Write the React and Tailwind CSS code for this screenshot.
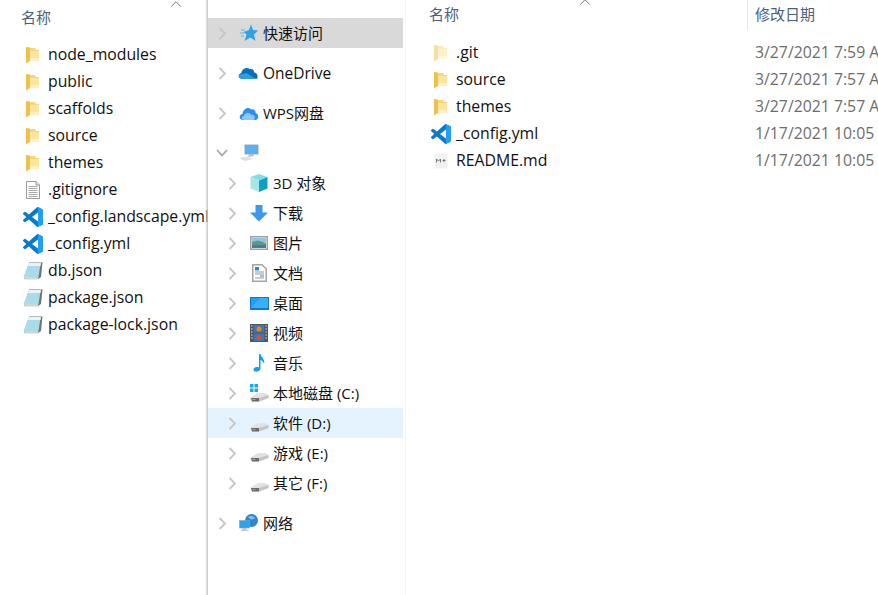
import { ChevronUp } from "lucide-react";

const font = "font-['Open_Sans','Noto_Sans_CJK_SC',sans-serif]";

const Folder = ({ faded }) => (
  <svg width="13" height="18" viewBox="0 0 13 18" className={`-ml-px ${faded ? "opacity-50" : ""}`}>
    <path d="M0 2 H9 L10 4 H13 V15 H0 Z" fill="#f7d675" />
    <path d="M4 5 H13 V15 H4 Z" fill="#fde59c" />
    <path d="M0 1 L4 1.5 V15 L0 17.5 Z" fill="#eec04e" />
    <path d="M4 12 H13 V15 H4 Z" fill="#fff0c2" />
  </svg>
);

const TextFile = () => (
  <svg width="16" height="18" viewBox="0 0 16 18">
    <path d="M1.5 .5 H11 L14.5 4 V17.5 H1.5 Z" fill="#fff" stroke="#9a9a9a" />
    <path d="M11 .5 V4 H14.5" fill="#ddd" stroke="#9a9a9a" />
    <path d="M3.5 5.5 H12.5 M3.5 7.5 H12.5 M3.5 9.5 H12.5 M3.5 11.5 H12.5 M3.5 13.5 H12.5 M3.5 15.5 H12.5" stroke="#a8a8a8" />
  </svg>
);

const VSCode = () => (
  <svg width="20" height="20" viewBox="0 0 24 24">
    <path
      d="M23.15 2.587L18.21.21a1.494 1.494 0 0 0-1.705.29l-9.46 8.63-4.12-3.128a.999.999 0 0 0-1.276.057L.327 7.261A1 1 0 0 0 .326 8.74L3.899 12 .326 15.26a1 1 0 0 0 .001 1.479L1.65 17.94a.999.999 0 0 0 1.276.057l4.12-3.128 9.46 8.63a1.492 1.492 0 0 0 1.704.29l4.942-2.377A1.5 1.5 0 0 0 24 20.06V3.939a1.5 1.5 0 0 0-.85-1.352zm-5.146 14.861L10.826 12l7.178-5.448v10.896z"
      fill="#0b7bc9"
    />
    <path d="M18 0 L23.2 2.6 Q24 3.1 24 4 V20 Q24 21 23.2 21.4 L18 24 Z" fill="#1fa0f4" />
  </svg>
);

const Notepad = () => (
  <svg width="20" height="18" viewBox="0 0 20 18">
    <path d="M6 0.5 H19.5 L18 15 L15 17 L1 17 Z" fill="#69777a" />
    <path d="M5.5 2 H17.5 L15.5 15 H0.5 Z" fill="#a8dce8" />
    <path d="M5.5 1 H18 L17.5 4 H5 Z" fill="#eef2f2" />
    <path d="M0.5 15 H15.5 L14.5 17.5 H2 Z" fill="#cfd6d6" />
  </svg>
);

const Markdown = () => (
  <svg width="14" height="16" viewBox="0 0 14 16">
    <rect x="0.5" y="0.5" width="13" height="15" fill="#f1f1f1" />
    <path d="M2.5 9.5 V6 L4.5 8 L6.5 6 V9.5" fill="none" stroke="#777" strokeWidth="1" />
    <path d="M8.5 7.5 H11.5 M10 6 V9" fill="none" stroke="#777" strokeWidth="1" />
  </svg>
);

const Star = () => (
  <svg width="18" height="18" viewBox="0 0 18 18">
    <path d="M11 0.5 L13 6 L18 6.5 L14 10.5 L15.5 17 L10.5 13.5 L4.5 17 L6.5 10.5 L3.5 8 L9 6 Z" fill="#2da4ea" />
    <path d="M1 6 H5 M0 9 H4 M1 12 H4" stroke="#5cb2ea" strokeWidth="1" />
  </svg>
);

const OneDrive = () => (
  <svg width="20" height="14" viewBox="0 0 21 14" className="-ml-[2px]">
    <path d="M4 13 C0 13 -.5 8 3.5 7 C4 3 9 0 12.5 3 C15 2 17 4 17 6.5 C20 6.5 21.5 10 20 13 Z" fill="#0f6cbd" />
    <path d="M4 13 C1 13 0 10 2 8.5 L9 7 L18 13 Z" fill="#28a0e8" />
  </svg>
);

const WpsCloud = () => (
  <svg width="20" height="15" viewBox="0 0 20 15" className="-ml-px">
    <path d="M4 14 C0 14 -.5 8.5 3.5 8 C4 3 9 0 12 3.5 C15 2.5 17 5 16.5 7 C20 7.5 20.5 14 16 14 Z" fill="#2f8cf0" />
    <path d="M5 14 C2 14 2 10 5 10 C6 6 11 6 12 9 C15 8 17 11 15 14 Z" fill="#8cc8fa" />
  </svg>
);

const Computer = () => (
  <svg width="20" height="18" viewBox="0 0 20 18" className="-ml-px">
    <rect x="6" y="1" width="13" height="9" fill="#58b4ee" stroke="#8a9aa5" strokeWidth="0.8" />
    <path d="M10 10 L9 13 L15 12 L14 10 Z" fill="#b9c0c5" />
    <path d="M0 14 L8 12.5 L14 15 L6 17 Z" fill="#dde0e3" />
  </svg>
);

const Cube = () => (
  <svg width="18" height="18" viewBox="0 0 18 18">
    <path d="M9 0 L17.5 3 L9 6.5 L.5 3 Z" fill="#7fe0e4" />
    <path d="M.5 3 L9 6.5 V18 L.5 14.5 Z" fill="#a6e6e6" />
    <path d="M17.5 3 L9 6.5 V18 L17.5 14.5 Z" fill="#119fc4" />
  </svg>
);

const Download = () => (
  <svg width="18" height="17" viewBox="0 0 18 17">
    <path d="M5.5 0 H12.5 V7.5 H18 L9 16.5 L0 7.5 H5.5 Z" fill="#3d97ea" />
  </svg>
);

const Pictures = () => (
  <svg width="18" height="14" viewBox="0 0 18 14">
    <rect x="0.75" y="0.75" width="16.5" height="12.5" fill="#fff" stroke="#a0a0a0" strokeWidth="1.5" />
    <rect x="2" y="2" width="14" height="4.5" fill="#8cc4ea" />
    <path d="M2 6 L8 4.5 L16 7 V12 H2 Z" fill="#5f9a80" />
    <rect x="2" y="9" width="14" height="3" fill="#3f7fa0" />
  </svg>
);

const Documents = () => (
  <svg width="15" height="18" viewBox="0 0 15 18">
    <path d="M.75 .75 H10 L14.25 5 V17.25 H.75 Z" fill="#fff" stroke="#a5a5a5" strokeWidth="1.5" />
    <path d="M3 3 H7 V6.5 H3 Z" fill="#2c86d8" />
    <path d="M3 8 H12 M3 10 H12 M3 14 H12" stroke="#8f9aa3" />
    <path d="M8 12 H12" stroke="#2c86d8" />
  </svg>
);

const Desktop = () => (
  <svg width="19" height="13" viewBox="0 0 19 13">
    <rect width="19" height="13" fill="#0e78d5" />
    <rect x="1" y="1" width="17" height="10" fill="#1fa0f5" />
    <path d="M1 11 L10 1 H18 V11 Z" fill="#3bb0fa" />
  </svg>
);

const Videos = () => (
  <svg width="18" height="18" viewBox="0 0 18 18">
    <rect width="18" height="18" fill="#555" />
    <rect x="3.5" y="1" width="11" height="7.5" fill="#3d77b8" />
    <rect x="3.5" y="9.5" width="11" height="7.5" fill="#3d77b8" />
    <circle cx="9" cy="5" r="2.5" fill="#e08a2c" />
    <circle cx="9" cy="13.5" r="2.5" fill="#d8502c" />
    <path d="M1 2 H2.5 M1 5 H2.5 M1 8 H2.5 M1 11 H2.5 M1 14 H2.5 M15.5 2 H17 M15.5 5 H17 M15.5 8 H17 M15.5 11 H17 M15.5 14 H17" stroke="#ddd" strokeWidth="1.2" />
  </svg>
);

const Music = () => (
  <svg width="13" height="18" viewBox="0 0 13 18">
    <path d="M6 0 H7.5 C8 3.5 12.5 5 11 10 C10.5 7.5 9 6.5 7.5 6 V14.5 C7.5 17 4 18 2 17.5 C0 17 0 14.5 2 13.5 C3.5 12.8 5 13 6 13.5 Z" fill="#0fa0f0" />
  </svg>
);

const Drive = ({ windows }) => (
  <svg width="19" height="18" viewBox="0 0 19 18">
    {windows && (
      <g fill="#14a8ee">
        <rect x="0" y="0" width="3.5" height="3.5" />
        <rect x="4.5" y="0" width="3.5" height="3.5" />
        <rect x="0" y="4.5" width="3.5" height="3.5" />
        <rect x="4.5" y="4.5" width="3.5" height="3.5" />
      </g>
    )}
    <path d="M0.5 13.5 L8 9 H15 L18.5 11 V14 L9 17.5 H2 L0.5 16 Z" fill="#e2e2e2" />
    <path d="M1 14 H9 V17.5 H2 Z" fill="#6b6b6b" />
    <path d="M9 14 L18.5 11 V14 L9 17.5 Z" fill="#c4c4c4" />
    <path d="M2.5 15.5 H5.5" stroke="#6fce70" />
  </svg>
);

const Network = () => (
  <svg width="20" height="18" viewBox="0 0 20 18" className="-ml-px">
    <circle cx="12.5" cy="6.5" r="6.5" fill="#2f86c8" />
    <path d="M9 3 C11 1 15 2 16 4 C14 6 11 6 9 3 Z" fill="#7cc4ee" />
    <rect x="0.5" y="6.5" width="10" height="7.5" fill="#29a3ef" stroke="#8fa0ad" strokeWidth="0.6" />
    <path d="M3 14 H8 V16 H10 V17 H2 V16 H3 Z" fill="#c4c9cd" />
  </svg>
);

const Chevron = () => (
  <svg width="9" height="13" viewBox="0 0 9 13" fill="none" stroke="#c6c6c6" strokeWidth="1.8">
    <path d="M1.5 1 L7 6.5 L1.5 12" />
  </svg>
);

const ChevronOpen = () => (
  <svg width="12" height="8" viewBox="0 0 12 8" fill="none" stroke="#a6a6a6" strokeWidth="1.8">
    <path d="M1 1 L6 6.5 L11 1" />
  </svg>
);

const leftFiles = [
  [<Folder />, "node_modules"],
  [<Folder />, "public"],
  [<Folder />, "scaffolds"],
  [<Folder />, "source"],
  [<Folder />, "themes"],
  [<TextFile />, ".gitignore"],
  [<VSCode />, "_config.landscape.yml"],
  [<VSCode />, "_config.yml"],
  [<Notepad />, "db.json"],
  [<Notepad />, "package.json"],
  [<Notepad />, "package-lock.json"],
];

const rightFiles = [
  [<Folder faded />, ".git", "3/27/2021 7:59 AM"],
  [<Folder />, "source", "3/27/2021 7:57 AM"],
  [<Folder />, "themes", "3/27/2021 7:57 AM"],
  [<VSCode />, "_config.yml", "1/17/2021 10:05 AM"],
  [<Markdown />, "README.md", "1/17/2021 10:05 AM"],
];

const thisPc = [
  [<Cube />, "3D 对象"],
  [<Download />, "下载"],
  [<Pictures />, "图片"],
  [<Documents />, "文档"],
  [<Desktop />, "桌面"],
  [<Videos />, "视频"],
  [<Music />, "音乐"],
  [<Drive windows />, "本地磁盘 (C:)"],
  [<Drive />, "软件 (D:)", "bg-[#e5f3ff]"],
  [<Drive />, "游戏 (E:)"],
  [<Drive />, "其它 (F:)"],
];

const NavRow = ({ icon, label, bg = "", child, open, size = "text-[15px]" }) => (
  <div className={`flex h-[30px] items-center ${child ? "pl-[18px]" : "pl-[8px]"} ${bg}`}>
    <span className="flex w-[12px] justify-center">{open ? <ChevronOpen /> : <Chevron />}</span>
    <span className="ml-[10px] flex w-[22px] shrink-0 justify-center">{icon}</span>
    <span className={`ml-[3px] pt-px whitespace-nowrap text-[#111] ${size}`}>{label}</span>
  </div>
);

const FileRow = ({ icon, name, date }) => (
  <div className="flex h-[27px] items-center">
    <span className="flex w-[20px] shrink-0 justify-center">{icon}</span>
    <span className="ml-[5px] w-[299px] shrink-0 text-[15.8px] whitespace-nowrap text-[#111]">{name}</span>
    {date && <span className="text-[15.8px] whitespace-nowrap text-[#6d6d6d]">{date}</span>}
  </div>
);

export default function App() {
  return (
    <div className={`flex h-[595px] w-[878px] overflow-hidden bg-white ${font}`}>
      {/* left explorer window */}
      <div className="relative w-[208px] shrink-0 overflow-hidden">
        <div className="flex h-[34px] items-center pl-[21px] text-[15px] text-[#4c607a]">名称</div>
        <ChevronUp size={18} strokeWidth={1.3} className="absolute top-[-5px] left-[167px] text-[#777]" />
        <div className="pt-[7px] pl-[23px]">
          {leftFiles.map(([icon, name]) => (
            <FileRow key={name} icon={icon} name={name} />
          ))}
        </div>
        <div className="absolute inset-y-0 right-0 w-[3px] bg-gradient-to-r from-transparent to-[#c4c4c4]" />
      </div>

      {/* nav pane */}
      <div className="w-[195px] shrink-0 pt-[18px]">
        <NavRow icon={<Star />} label="快速访问" bg="bg-[#d9d9d9]" />
        <div className="mt-[10px]">
          <NavRow icon={<OneDrive />} label="OneDrive" size="text-[15.5px]" />
        </div>
        <div className="mt-[10px]">
          <NavRow icon={<WpsCloud />} label="WPS网盘" />
        </div>
        <div className="mt-[10px]">
          <NavRow icon={<Computer />} label="" open />
          {thisPc.map(([icon, label, bg]) => (
            <NavRow key={label} icon={icon} label={label} bg={bg} child />
          ))}
        </div>
        <div className="mt-[10px]">
          <NavRow icon={<Network />} label="网络" />
        </div>
      </div>

      {/* file list */}
      <div className="relative ml-[2px] flex-1 overflow-hidden border-l border-[#f5f5f5]">
        <div className="flex h-[30px] text-[15px] text-[#4c607a]">
          <div className="flex w-[341px] items-center pb-[2px] pl-[23px]">名称</div>
          <div className="flex items-center border-l border-[#e5e5e5] pb-[2px] pl-[7px] whitespace-nowrap">修改日期</div>
        </div>
        <ChevronUp size={18} strokeWidth={1.3} className="absolute top-[-7px] left-[170px] text-[#777]" />
        <div className="pt-[9px] pl-[25px]">
          {rightFiles.map(([icon, name, date]) => (
            <FileRow key={name} icon={icon} name={name} date={date} />
          ))}
        </div>
      </div>
    </div>
  );
}
